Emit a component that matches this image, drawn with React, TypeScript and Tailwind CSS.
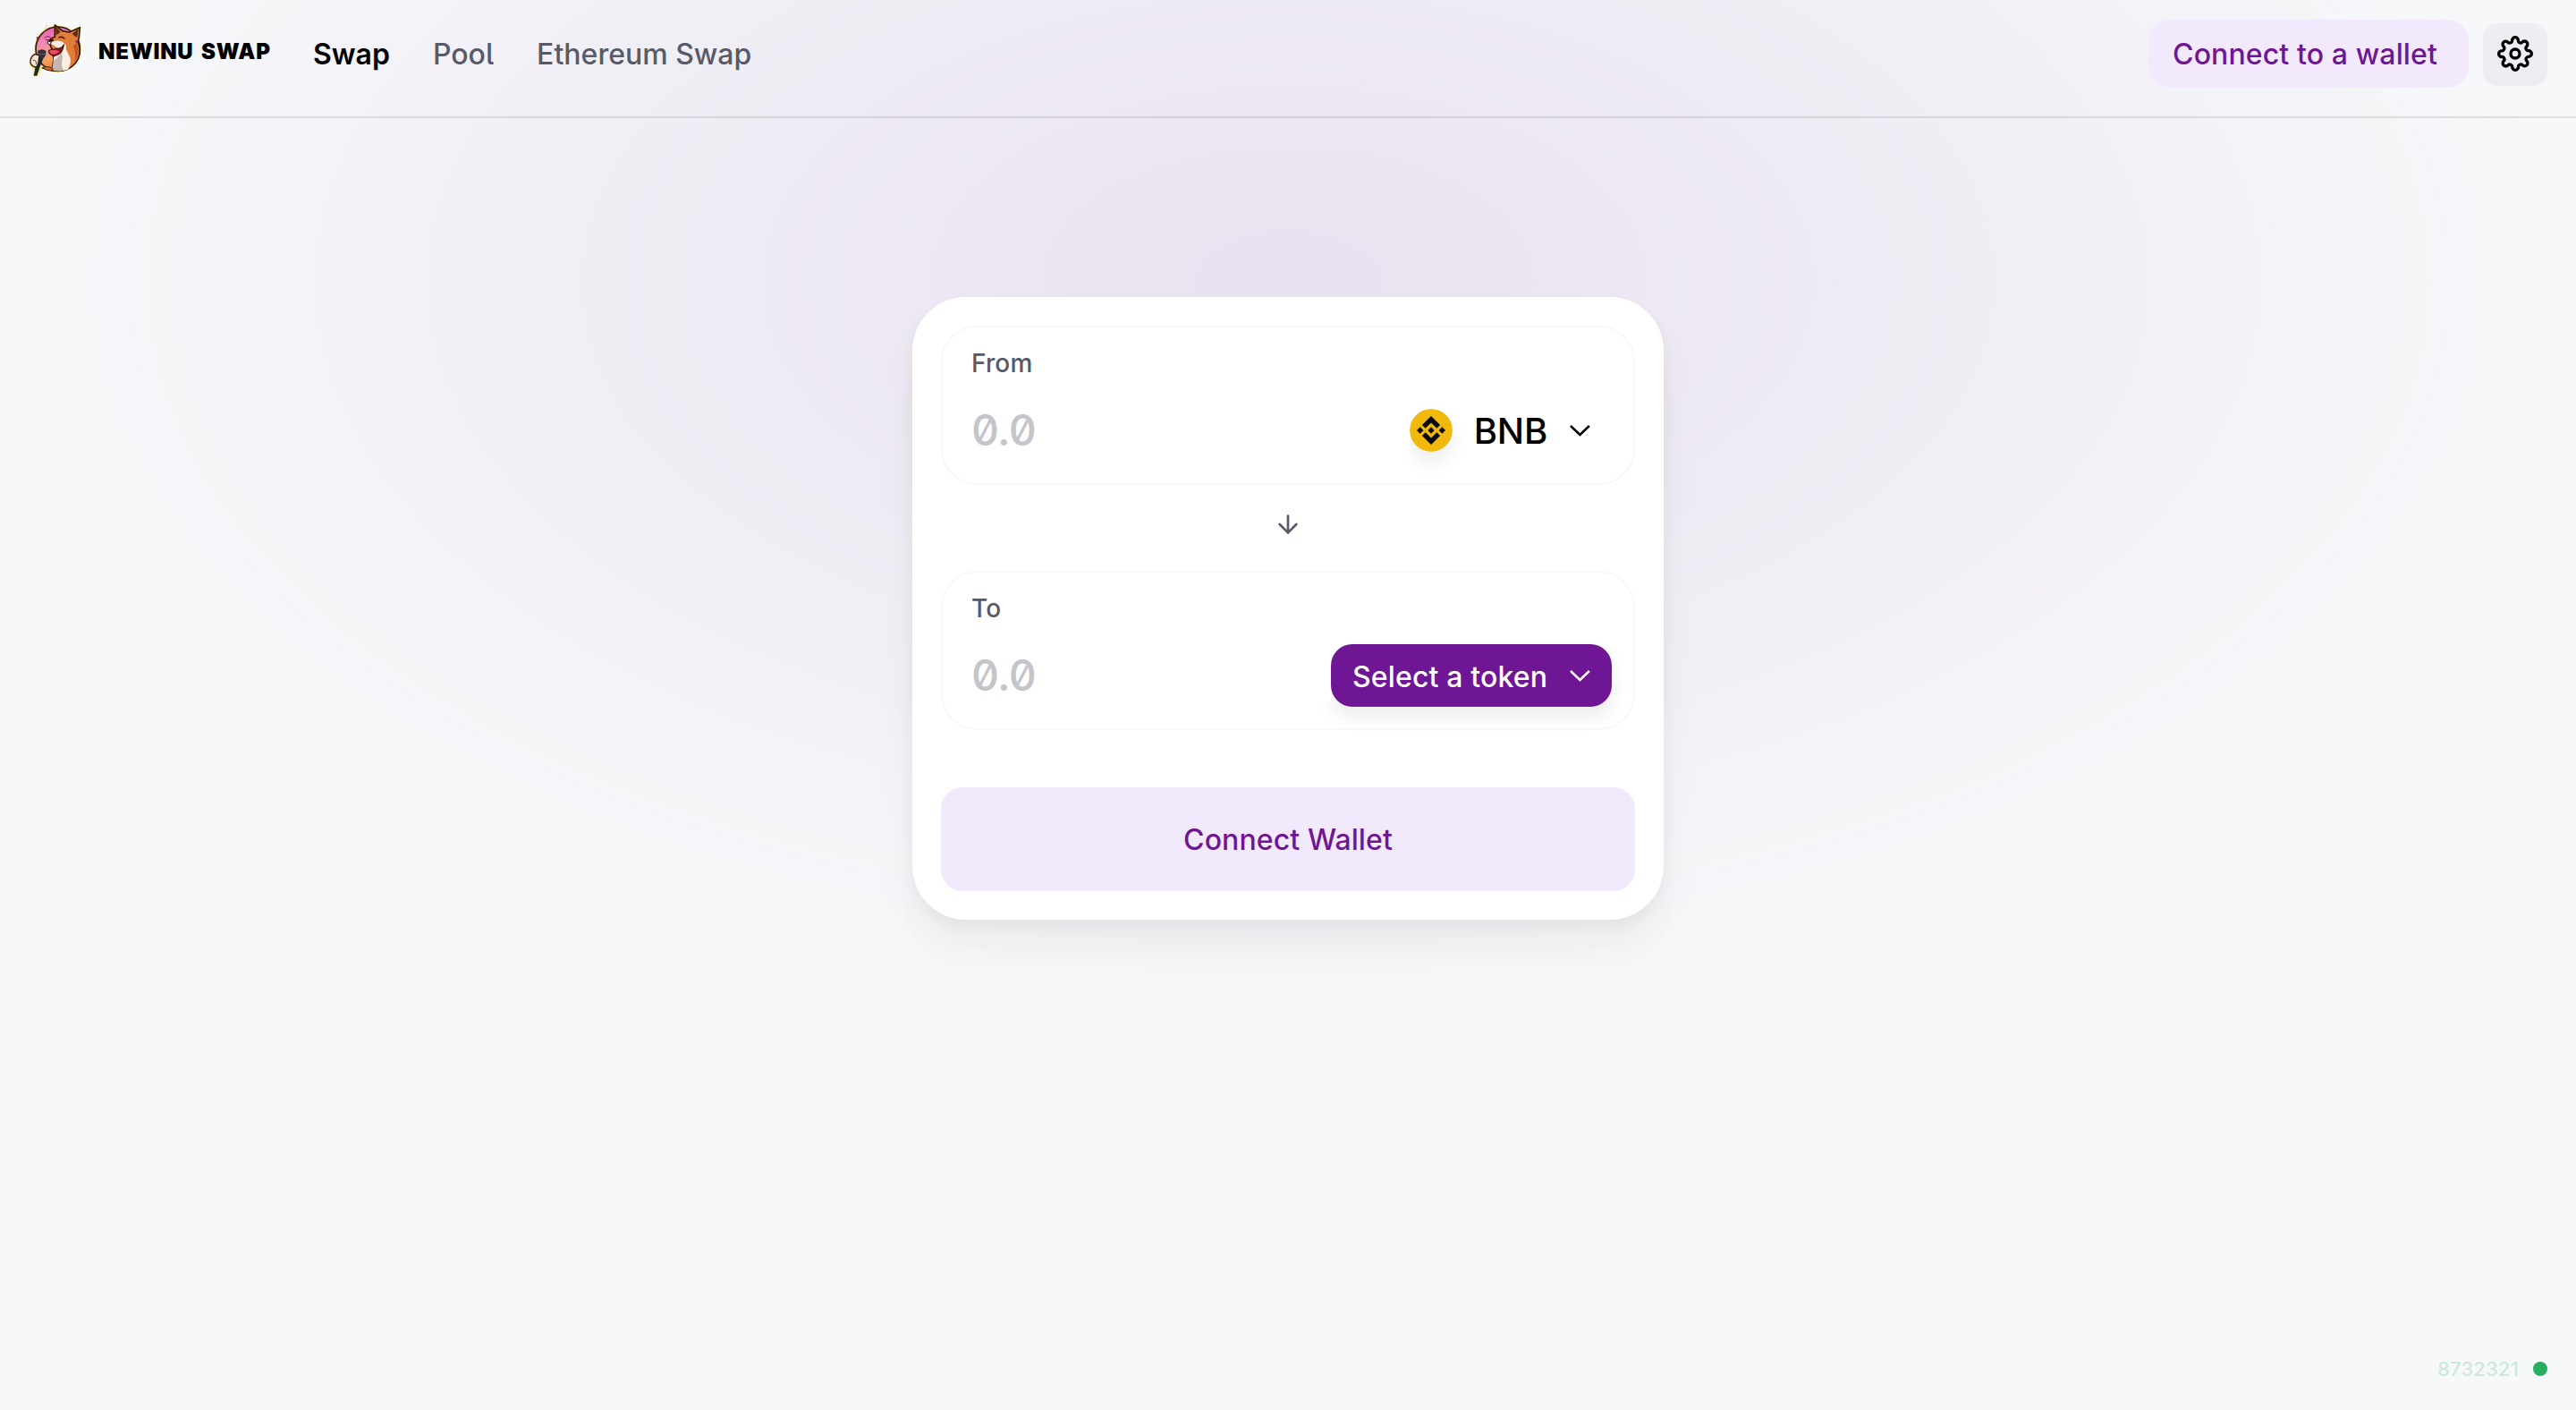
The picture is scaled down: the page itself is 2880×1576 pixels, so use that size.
import React from "react";
import { FiArrowDown, FiSettings } from "react-icons/fi";

function ShibaLogo() {
  return (
    <svg viewBox="36 36 180 180" className="h-[60px] w-[60px] shrink-0" strokeLinejoin="round" strokeLinecap="round">
      <defs>
        <linearGradient id="moon" x1="0" y1="0" x2="0.25" y2="1">
          <stop offset="0" stopColor="#e954b4" />
          <stop offset="0.4" stopColor="#f38bb4" />
          <stop offset="0.75" stopColor="#f5a463" />
          <stop offset="1" stopColor="#ee7f3c" />
        </linearGradient>
      </defs>
      <g fill="#f6ec8e" stroke="#f6ec8e" strokeWidth="8">
        <circle cx="134" cy="122" r="75" />
        <path d="M122 70L124 42L150 58L176 64L208 50L204 92Z" />
        <path d="M58 138L43 154L42 176L56 188L54 210L66 210L80 180Z" />
      </g>
      <circle cx="134" cy="122" r="74" fill="url(#moon)" stroke="#36190f" strokeWidth="5" />
      <path d="M64 90L64 82L72 86M90 84Q98 76 108 82M94 92L106 92" fill="none" stroke="#7d1f58" strokeWidth="3" />
      <path d="M104 98L110 88L124 82L124 42L150 62L172 66L208 50L205 84L201 98Q214 126 202 156Q186 188 150 195L114 193L120 160L118 132L108 108Z" fill="#e07d38" stroke="#36190f" strokeWidth="5" />
      <path d="M128 50L141 65L130 74ZM201 58L197 82L184 72Z" fill="#5b2a17" stroke="#36190f" strokeWidth="2" />
      <path d="M197 102Q210 134 190 168Q197 134 185 112Z" fill="#bd5521" />
      <path d="M108 102Q126 90 146 97Q166 106 162 124Q166 134 174 148Q182 168 168 191Q138 200 114 193Q120 172 120 150Q134 142 140 124Z" fill="#fbeee2" />
      <path d="M146 136Q134 152 122 160L115 193Q134 198 154 194Q144 182 148 166Q152 150 146 136Z" fill="#c4b5ae" />
      <path d="M138 84Q146 78 156 87" fill="none" stroke="#36190f" strokeWidth="4" />
      <path d="M106 91Q114 86 121 92Q117 99 106 98Z" fill="#24100c" />
      <path d="M102 96L112 100L108 108L100 104Z" fill="#fff" stroke="#36190f" strokeWidth="3" />
      <path d="M154 108Q148 121 130 121L104 127Q102 138 118 144Q148 146 154 108Z" fill="#a3152c" stroke="#36190f" strokeWidth="4" />
      <path d="M104 129Q118 121 138 130Q128 145 110 138Z" fill="#ee4a60" />
      <path d="M56 140Q40 150 42 170Q50 184 64 184L78 164L76 144Z" fill="#f5e4d6" stroke="#36190f" strokeWidth="4" />
      <path d="M52 160Q62 158 62 172" fill="none" stroke="#36190f" strokeWidth="2.5" />
      <path d="M82 186Q96 176 116 188L118 196Q98 196 82 186Z" fill="#d96d2c" stroke="#36190f" strokeWidth="3" />
      <path d="M70 144L88 146L74 182L64 212L53 212L58 186L66 172Z" fill="#27262b" />
      <path d="M67 128Q80 119 94 128Q95 148 84 154Q70 152 67 140Z" fill="#333238" />
      <path d="M70 138L92 140" stroke="#6b6a70" strokeWidth="2.5" />
      <circle cx="197" cy="97" r="4" fill="#93208d" />
      <path d="M94 52L96 41L100 45" fill="none" stroke="#f9b3a0" strokeWidth="2.5" />
      <circle cx="92" cy="54" r="3" fill="#f8dc9a" />
    </svg>
  );
}

function BnbLogo() {
  return (
    <svg viewBox="0 0 48 48" className="h-12 w-12 rounded-full shadow-[0_12px_20px_rgba(0,0,0,0.075)]">
      <circle cx="24" cy="24" r="24" fill="#f0b90b" />
      <g fill="#0b0b0d">
        <path d="M24 8L34.1 18.1L30.3 21.8L24 15.5L17.7 21.8L13.9 18.1Z" />
        <path d="M24 40L34.1 29.9L30.3 26.2L24 32.5L17.7 26.2L13.9 29.9Z" />
        <path d="M24 20.3L27.7 24L24 27.7L20.3 24Z" />
        <path d="M11.7 20.3L15.4 24L11.7 27.7L8 24Z" />
        <path d="M36.3 20.3L40 24L36.3 27.7L32.6 24Z" />
      </g>
    </svg>
  );
}

function Chevron() {
  return (
    <svg viewBox="0 0 12 7" className="h-[14px] w-6" fill="none" stroke="currentColor" strokeWidth="1.25">
      <path d="M0.97 1L6.2 6L11.44 1" />
    </svg>
  );
}

function CurrencyPanel({ label, children }: { label: string; children: React.ReactNode }) {
  return (
    <section className="flex h-[178px] flex-col rounded-[40px] border-2 border-[#f7f8fa] bg-white">
      <div className="px-8 pt-6 text-[28px] leading-8 font-medium tracking-[0.15px] text-[#565a69]">{label}</div>
      <div className="flex items-center pt-6 pr-6 pl-8">
        <input
          placeholder="0.0"
          className="relative z-10 h-[58px] w-0 grow bg-white text-[48px] leading-[58px] font-medium tracking-[-0.6px] text-black outline-none placeholder:text-[#c3c5cb] placeholder:opacity-100 [font-feature-settings:'zero']"
        />
        {children}
      </div>
    </section>
  );
}

export default function App() {
  return (
    <div className="flex h-[1576px] w-[2880px] flex-col bg-[#f7f8fa] bg-[radial-gradient(50%_50%_at_50%_50%,rgba(103,22,148,0.103)_0%,rgba(103,22,148,0)_100%)] bg-[position:0_-473px] bg-no-repeat font-['Inter',sans-serif] text-black">
      <header className="flex h-[132px] items-start justify-between border-b-2 border-black/10 px-8">
        <div className="flex h-[120px] items-center">
          <div className="flex items-center pb-2">
            <ShibaLogo />
            <span className="w-[258px] pt-[3px] pl-[18px] text-[24px] font-black tracking-[0.75px] whitespace-nowrap [word-spacing:3px]">
              NEWINU SWAP
            </span>
          </div>
          <nav className="flex gap-12 pt-0.5 text-[32px] font-medium text-[#565a69]">
            <a className="font-semibold text-black">Swap</a>
            <a>
              Poo<span className="[font-feature-settings:'cv05']">l</span>
            </a>
            <a>Ethereum Swap</a>
          </nav>
        </div>
        <div className="flex h-[120px] items-center gap-4">
          <button className="h-[76px] w-[358px] rounded-[24px] bg-[#f3e9fd] pt-0.5 pr-2 text-[32px] font-medium tracking-[0.12px] whitespace-nowrap text-[#6e1694]">
            Connect to a wallet
          </button>
          <button className="mt-0.5 flex h-[70px] w-[72px] items-center justify-center rounded-[16px] bg-[#edeef2] pb-0.5">
            <FiSettings className="h-10 w-10" />
          </button>
        </div>
      </header>

      <main className="mx-auto mt-[200px] flex w-[840px] flex-col rounded-[60px] bg-white p-8 shadow-[0_0_2px_rgba(0,0,0,0.01),0_8px_16px_rgba(0,0,0,0.04),0_32px_48px_rgba(0,0,0,0.04),0_48px_64px_rgba(0,0,0,0.01)]">
        <CurrencyPanel label="From">
          <button className="flex h-[70px] items-center pr-6">
            <BnbLogo />
            <span className="mr-6 ml-6 pt-0.5 text-[40px] font-medium tracking-[-0.2px]">BNB</span>
            <Chevron />
          </button>
        </CurrencyPanel>
        <div className="flex h-24 items-center justify-center pb-2 text-[#565a69]">
          <FiArrowDown className="h-8 w-8" />
        </div>
        <CurrencyPanel label="To">
          <button className="flex h-[70px] w-[314px] items-center justify-between rounded-[24px] bg-[#6e1694] px-6 text-[32px] font-medium whitespace-nowrap text-white shadow-[0_12px_20px_rgba(0,0,0,0.075)]">
            <span className="pt-[3px] tracking-[0.15px]">Select a token</span>
            <Chevron />
          </button>
        </CurrencyPanel>
        <button className="mt-16 h-[116px] rounded-[24px] bg-[#f3e9fd] pt-0.5 text-[32px] font-medium tracking-[0.1px] text-[#6e1694]">
          Connect Wallet
        </button>
      </main>

      <footer className="mt-auto flex items-center justify-end gap-4 px-8 pb-8 text-[#27ae60]">
        <span className="text-[22px] leading-7 font-medium tracking-[0.15px] opacity-20">8732321</span>
        <span className="h-4 w-4 rounded-full bg-[#27ae60]" />
      </footer>
    </div>
  );
}
